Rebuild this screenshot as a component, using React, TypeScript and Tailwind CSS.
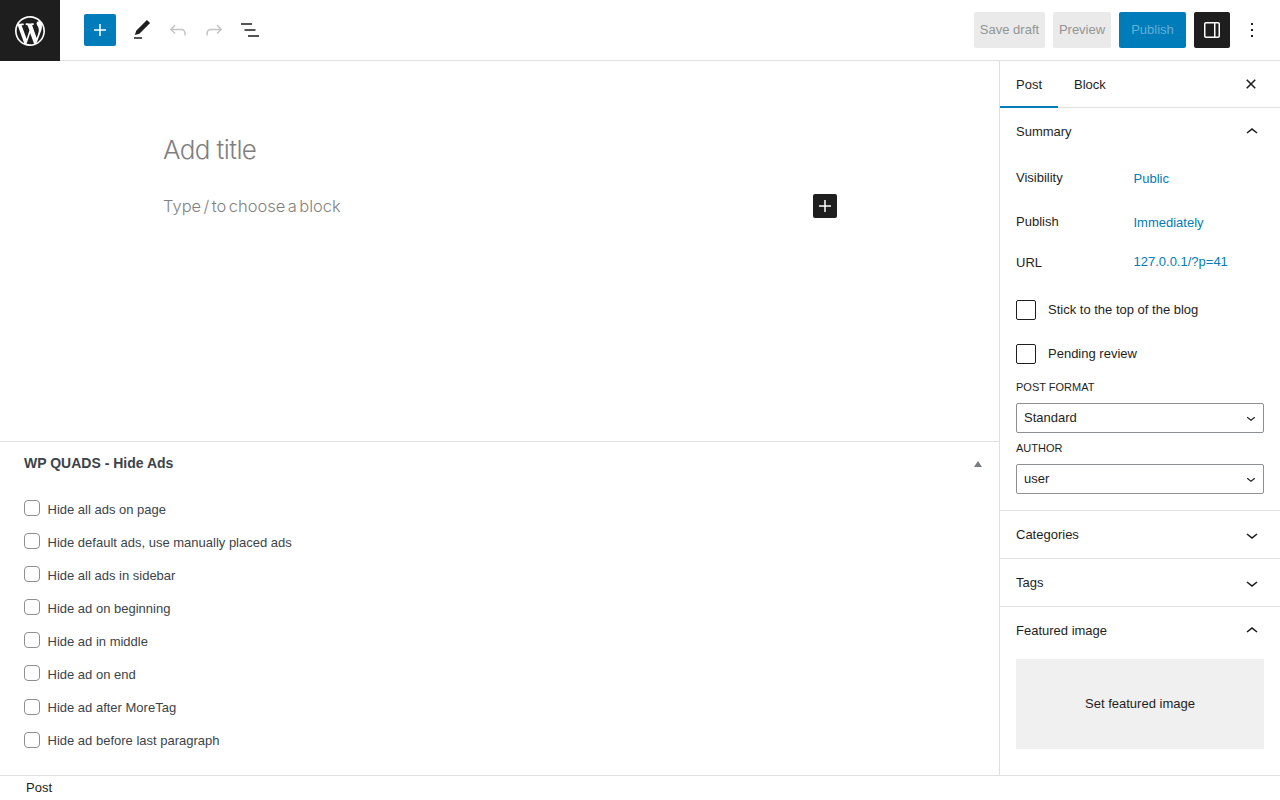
import React from 'react';

const Icon: React.FC<{ d: string; size?: number; className?: string; viewBox?: string }> = ({ d, size = 24, className = '', viewBox = '0 0 24 24' }) => (
  <svg width={size} height={size} viewBox={viewBox} fill="currentColor" className={className}>
    <path d={d} />
  </svg>
);

const PLUS = 'M18 11.25h-5.25V6h-1.5v5.25H6v1.5h5.25V18h1.5v-5.25H18z';
const PENCIL = 'M20.1 5.1L16.9 2 6.2 12.7l-1.3 4.4 4.5-1.3L20.1 5.1zM4 20.8h8v-1.5H4v1.5z';
const UNDO = 'M18.3 11.7c-.6-.6-1.4-.9-2.3-.9H6.7l2.9-3.3-1.1-1-4.5 5L8.5 16l1-1-2.7-2.7H16c.5 0 .9.2 1.3.5 1 1 1 3.4 1 4.5v.3h1.5v-.2c0-1.5 0-4.3-1.5-5.7z';
const REDO = 'M15.6 6.5l-1.1 1 2.9 3.3H8c-.9 0-1.7.3-2.3.9-1.4 1.5-1.4 4.2-1.4 5.6v.2h1.5v-.3c0-1.1 0-3.5 1-4.5.3-.3.7-.5 1.3-.5h9.2L14.5 15l1.1 1.1 4.6-4.6-4.6-5z';
const LIST_VIEW = 'M3 5.2h11v1.5H3zM6.5 11.2h11v1.5h-11zM10 17.2h11v1.5H10z';
const SIDEBAR = 'M18 4H6c-1.1 0-2 .9-2 2v12c0 1.1.9 2 2 2h12c1.1 0 2-.9 2-2V6c0-1.1-.9-2-2-2zm-4 14.5H6c-.3 0-.5-.2-.5-.5V6c0-.3.2-.5.5-.5h8v13zm4.5-.5c0 .3-.2.5-.5.5h-2.5v-13H18c.3 0 .5.2.5.5v12z';
const CLOSE = 'M12 13.06l3.712 3.713 1.061-1.06L13.061 12l3.712-3.712-1.06-1.06L12 10.938 8.288 7.227l-1.061 1.06L10.939 12l-3.712 3.712 1.06 1.061L12 13.061z';
const MORE = 'M13 19h-2v-2h2v2zm0-6h-2v-2h2v2zm0-6h-2V5h2v2z';
const CHEVRON_UP = 'M6.5 12.4L12 8l5.5 4.4-.9 1.2L12 10l-4.5 3.6-1-1.2z';
const CHEVRON_DOWN = 'M17.5 11.6L12 16l-5.5-4.4.9-1.2L12 14l4.5-3.6 1 1.2z';
const WP_LOGO = 'M20 10c0-5.51-4.49-10-10-10C4.48 0 0 4.49 0 10c0 5.52 4.48 10 10 10 5.51 0 10-4.48 10-10zM7.78 15.37L4.37 6.22c.55-.02 1.17-.08 1.17-.08.5-.06.44-1.13-.06-1.11 0 0-1.45.11-2.37.11-.18 0-.37 0-.58-.01C4.12 2.69 6.87 1.11 10 1.11c2.33 0 4.45.87 6.05 2.34-.68-.11-1.65.39-1.65 1.58 0 .74.45 1.36.9 2.1.35.61.55 1.36.55 2.46 0 1.49-1.4 5-1.4 5l-3.03-8.37c.54-.02.82-.17.82-.17.5-.05.44-1.25-.06-1.22 0 0-1.44.12-2.38.12-.87 0-2.33-.12-2.33-.12-.5-.03-.56 1.2-.06 1.22l.92.08 1.26 3.41zM17.41 10c.24-.64.74-1.87.43-4.25.7 1.29 1.05 2.71 1.05 4.25 0 3.29-1.73 6.24-4.4 7.78.97-2.59 1.94-5.2 2.92-7.78zM6.1 18.09C3.12 16.65 1.11 13.53 1.11 10c0-1.3.23-2.48.72-3.59C3.25 10.3 4.67 14.2 6.1 18.09zm4.03-6.63l2.58 6.98c-.86.29-1.76.45-2.71.45-.79 0-1.57-.11-2.29-.33.81-2.38 1.62-4.74 2.42-7.1z';

const hideOptions = [
  'Hide all ads on page',
  'Hide default ads, use manually placed ads',
  'Hide all ads in sidebar',
  'Hide ad on beginning',
  'Hide ad in middle',
  'Hide ad on end',
  'Hide ad after MoreTag',
  'Hide ad before last paragraph',
];

const PanelHeader: React.FC<{ title: string; open?: boolean; className?: string }> = ({ title, open, className = '' }) => (
  <div className={`h-[47px] px-4 flex items-center justify-between text-[13px] text-[#1e1e1e] ${className}`}>
    <span>{title}</span>
    <Icon d={open ? CHEVRON_UP : CHEVRON_DOWN} />
  </div>
);

const SelectBox: React.FC<{ value: string }> = ({ value }) => (
  <div className="h-[30px] border border-[#8c8f94] rounded-[2px] pl-[7px] pr-[3px] flex items-center justify-between text-[13px] text-[#1e1e1e]">
    <span>{value}</span>
    <Icon d={CHEVRON_DOWN} size={18} />
  </div>
);

const SummaryRow: React.FC<{ label: string; value: string; className: string; labelClass?: string }> = ({ label, value, className, labelClass = '' }) => (
  <div className={`flex items-start text-[13px] ${className}`}>
    <span className={`w-[117.5px] text-[#1e1e1e] ${labelClass}`}>{label}</span>
    <span className="text-[#007cba]">{value}</span>
  </div>
);

const BlogCheck: React.FC<{ label: string; className: string }> = ({ label, className }) => (
  <label className={`flex items-center gap-3 text-[13px] text-[#1e1e1e] ${className}`}>
    <input type="checkbox" className="appearance-none w-5 h-5 border border-[#1e1e1e] rounded-[2px] bg-white" />
    {label}
  </label>
);

export default function App() {
  return (
    <div className="h-[800px] w-[1280px] overflow-hidden bg-white flex flex-col font-['Liberation_Sans',sans-serif]">
      {/* Top toolbar */}
      <header className="h-[61px] shrink-0 flex border-b border-[#e0e0e0]">
        <div className="w-[60px] h-[61px] bg-[#1e1e1e] text-white flex items-center justify-center">
          <Icon d={WP_LOGO} size={36} viewBox="-2 -2 24 24" />
        </div>
        <div className="flex items-center pl-6">
          <button className="w-8 h-8 bg-[#007cba] rounded-[2px] text-white flex items-center justify-center">
            <Icon d={PLUS} />
          </button>
          <button className="w-9 h-9 ml-2 flex items-center justify-center text-[#1e1e1e]"><Icon d={PENCIL} /></button>
          <button className="w-9 h-9 flex items-center justify-center text-[#c4c4c4]"><Icon d={UNDO} /></button>
          <button className="w-9 h-9 flex items-center justify-center text-[#c4c4c4]"><Icon d={REDO} /></button>
          <button className="w-9 h-9 flex items-center justify-center text-[#1e1e1e]"><Icon d={LIST_VIEW} /></button>
        </div>
        <div className="ml-auto flex items-center text-[13px]">
          <button className="h-9 w-[71px] bg-[#eaeaea] rounded-[2px] text-[#949494]">Save draft</button>
          <button className="h-9 w-[58px] ml-2 bg-[#eaeaea] rounded-[2px] text-[#949494]">Preview</button>
          <button className="h-9 w-[67px] ml-2 bg-[#007cba] rounded-[2px] text-[#66b0d6]">Publish</button>
          <button className="h-9 w-9 ml-2 bg-[#1e1e1e] rounded-[2px] text-white flex items-center justify-center"><Icon d={SIDEBAR} /></button>
          <button className="w-6 h-9 ml-[10px] mr-4 flex items-center justify-center text-[#1e1e1e]"><Icon d={MORE} /></button>
        </div>
      </header>

      <div className="h-[714px] shrink-0 flex">
        {/* Editor column */}
        <main className="w-[1000px] border-r border-[#e0e0e0] flex flex-col">
          <section className="h-[381px] shrink-0 border-b border-[#e0e0e0] pl-[163px] pr-[162px] font-['Inter',sans-serif] text-[#7f7f7f]">
            <h1 className="mt-[73px] text-[26px] leading-[32px] font-light tracking-[-0.6px]">Add title</h1>
            <div className="mt-[28px] flex items-center justify-between h-6">
              <p className="mt-[1px] text-[16.5px] font-light [word-spacing:-2.2px]">Type / to choose a block</p>
              <button className="w-6 h-6 bg-[#1e1e1e] rounded-[2px] text-white flex items-center justify-center">
                <Icon d={PLUS} />
              </button>
            </div>
          </section>
          <section className="flex-1">
            <div className="h-[43px] px-6 flex items-center justify-between">
              <h2 className="text-[14px] font-bold text-[#3c434a]">WP QUADS - Hide Ads</h2>
              <span className="mr-[-7px] w-0 h-0 border-l-[4px] border-r-[4px] border-b-[6px] border-l-transparent border-r-transparent border-b-[#787c82]" />
            </div>
            <ul className="pt-2 px-6">
              {hideOptions.map((opt, i) => (
                <li key={opt} className="h-[33px] flex items-center text-[13px] text-[#3c434a]">
                  {/* last two boxes sit a pixel lower in the original */}
                  <input type="checkbox" className={`appearance-none w-4 h-4 mr-[7.5px] border border-[#8c8f94] rounded-[4px] bg-white ${i >= 6 ? 'mb-[1px]' : 'mb-[3px]'}`} />
                  {opt}
                </li>
              ))}
            </ul>
          </section>
        </main>

        {/* Settings sidebar */}
        <aside className="w-[280px] flex flex-col">
          <div className="h-[47px] shrink-0 border-b border-[#e0e0e0] flex text-[13px] text-[#1e1e1e]">
            <div className="w-[58px] h-[47px] pl-4 pt-[2px] flex items-center border-b-2 border-[#007cba]">Post</div>
            <div className="pl-4 pt-[1px] flex items-center">Block</div>
            <button className="ml-auto mr-[17px]"><Icon d={CLOSE} /></button>
          </div>

          <div className="border-b border-[#e0e0e0] pb-4">
            <PanelHeader title="Summary" open />
            <div className="px-4">
              <SummaryRow label="Visibility" value="Public" className="mt-[14px]" labelClass="mt-[-1px]" />
              <SummaryRow label="Publish" value="Immediately" className="mt-6" labelClass="mt-[-1px]" />
              <SummaryRow label="URL" value="127.0.0.1/?p=41" className="mt-5" labelClass="mt-[1px]" />
              <BlogCheck label="Stick to the top of the blog" className="mt-[27px]" />
              <BlogCheck label="Pending review" className="mt-6" />
              <p className="mt-[10px] text-[11px] leading-[26px] text-[#1e1e1e]">POST FORMAT</p>
              <div className="mt-[3px]"><SelectBox value="Standard" /></div>
              <p className="mt-[2px] text-[11px] leading-[26px] text-[#1e1e1e]">AUTHOR</p>
              <div className="mt-[3px]"><SelectBox value="user" /></div>
            </div>
          </div>
          <div className="border-b border-[#e0e0e0]"><PanelHeader title="Categories" className="pt-[2px]" /></div>
          <div className="border-b border-[#e0e0e0]"><PanelHeader title="Tags" className="pt-[2px]" /></div>
          <div>
            <PanelHeader title="Featured image" open className="pt-[2px]" />
            <div className="mx-4 mt-[5px] h-[90px] bg-[#f0f0f0] flex items-center justify-center text-[13px] text-[#1e1e1e]">
              Set featured image
            </div>
          </div>
        </aside>
      </div>

      {/* Breadcrumb footer */}
      <footer className="flex-1 border-t border-[#e0e0e0] pl-[26px] text-[13px] leading-[24px] text-[#1e1e1e]">Post</footer>
    </div>
  );
}
